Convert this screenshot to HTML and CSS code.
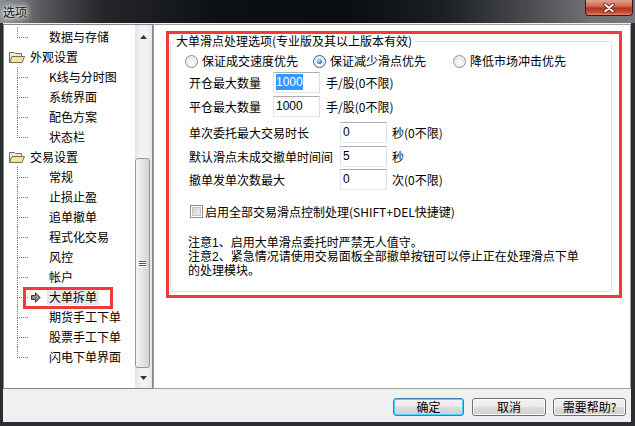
FILE: index.html
```html
<!DOCTYPE html>
<html lang="zh-CN">
<head>
    <meta charset="UTF-8">
    <meta name="viewport" content="width=device-width, initial-scale=1.0">
    <title>选项</title>
    <link rel="stylesheet" href="styles.css">
</head>
<body>

    <div class="window">
        <div class="titlebar">
            <span class="title">选项</span>
            <div class="close-btn">
                <svg width="12" height="10" viewBox="0 0 12 10">
                    <path d="M2 1.5 L10 8.5 M10 1.5 L2 8.5" stroke="#4a2018" stroke-width="3.4" stroke-linecap="round"/>
                    <path d="M2 1.5 L10 8.5 M10 1.5 L2 8.5" stroke="#fff" stroke-width="1.8" stroke-linecap="round"/>
                </svg>
            </div>
        </div>

        <div class="frame">
            <div class="main">
                <!-- 左侧树 -->
                <div class="tree">
                    <div class="tree-list">
                        <div class="node child last">
                            <span class="branch"><i class="branch-top"></i><i class="branch-bot"></i></span>
                            <span class="node-icon"></span>
                            <span class="node-text">数据与存储</span>
                        </div>
                        <div class="node group">
                            <svg class="folder" width="16" height="12" viewBox="0 0 16 12">
                                <path d="M0.5 11.5 V1.5 H5.5 L6.5 2.5 H12.5 V5" fill="#ecebdc" stroke="#6f6f60"/>
                                <path d="M0.5 11.5 L3 5.5 H15.5 L13 11.5 Z" fill="#f7e68a" stroke="#6f6f60"/>
                            </svg>
                            <span class="node-text">外观设置</span>
                        </div>
                        <div class="node child">
                            <span class="branch"><i class="branch-top"></i><i class="branch-bot"></i></span>
                            <span class="node-icon"></span>
                            <span class="node-text">K线与分时图</span>
                        </div>
                        <div class="node child">
                            <span class="branch"><i class="branch-top"></i><i class="branch-bot"></i></span>
                            <span class="node-icon"></span>
                            <span class="node-text">系统界面</span>
                        </div>
                        <div class="node child">
                            <span class="branch"><i class="branch-top"></i><i class="branch-bot"></i></span>
                            <span class="node-icon"></span>
                            <span class="node-text">配色方案</span>
                        </div>
                        <div class="node child last">
                            <span class="branch"><i class="branch-top"></i><i class="branch-bot"></i></span>
                            <span class="node-icon"></span>
                            <span class="node-text">状态栏</span>
                        </div>
                        <div class="node group">
                            <svg class="folder" width="16" height="12" viewBox="0 0 16 12">
                                <path d="M0.5 11.5 V1.5 H5.5 L6.5 2.5 H12.5 V5" fill="#ecebdc" stroke="#6f6f60"/>
                                <path d="M0.5 11.5 L3 5.5 H15.5 L13 11.5 Z" fill="#f7e68a" stroke="#6f6f60"/>
                            </svg>
                            <span class="node-text">交易设置</span>
                        </div>
                        <div class="node child">
                            <span class="branch"><i class="branch-top"></i><i class="branch-bot"></i></span>
                            <span class="node-icon"></span>
                            <span class="node-text">常规</span>
                        </div>
                        <div class="node child">
                            <span class="branch"><i class="branch-top"></i><i class="branch-bot"></i></span>
                            <span class="node-icon"></span>
                            <span class="node-text">止损止盈</span>
                        </div>
                        <div class="node child">
                            <span class="branch"><i class="branch-top"></i><i class="branch-bot"></i></span>
                            <span class="node-icon"></span>
                            <span class="node-text">追单撤单</span>
                        </div>
                        <div class="node child">
                            <span class="branch"><i class="branch-top"></i><i class="branch-bot"></i></span>
                            <span class="node-icon"></span>
                            <span class="node-text">程式化交易</span>
                        </div>
                        <div class="node child">
                            <span class="branch"><i class="branch-top"></i><i class="branch-bot"></i></span>
                            <span class="node-icon"></span>
                            <span class="node-text">风控</span>
                        </div>
                        <div class="node child">
                            <span class="branch"><i class="branch-top"></i><i class="branch-bot"></i></span>
                            <span class="node-icon"></span>
                            <span class="node-text">帐户</span>
                        </div>
                        <div class="node child selected">
                            <span class="branch"><i class="branch-top"></i><i class="branch-bot"></i></span>
                            <span class="node-icon">
                                <svg width="10" height="11" viewBox="0 0 10 11">
                                    <path d="M0.5 3.5 H4.5 V0.8 L9.3 5.5 L4.5 10.2 V7.5 H0.5 Z" fill="#8a8a8a" stroke="#3a3a3a"/>
                                </svg>
                            </span>
                            <span class="node-text">大单拆单</span>
                            <span class="mark"></span>
                        </div>
                        <div class="node child">
                            <span class="branch"><i class="branch-top"></i><i class="branch-bot"></i></span>
                            <span class="node-icon"></span>
                            <span class="node-text">期货手工下单</span>
                        </div>
                        <div class="node child">
                            <span class="branch"><i class="branch-top"></i><i class="branch-bot"></i></span>
                            <span class="node-icon"></span>
                            <span class="node-text">股票手工下单</span>
                        </div>
                        <div class="node child last">
                            <span class="branch"><i class="branch-top"></i><i class="branch-bot"></i></span>
                            <span class="node-icon"></span>
                            <span class="node-text">闪电下单界面</span>
                        </div>
                    </div>

                    <div class="scrollbar">
                        <div class="scroll-btn up">
                            <svg width="7" height="4" viewBox="0 0 7 4"><path d="M0 4 L3.5 0 L7 4 Z" fill="#333"/></svg>
                        </div>
                        <div class="thumb">
                            <i></i><i></i><i></i>
                        </div>
                        <div class="scroll-btn down">
                            <svg width="7" height="4" viewBox="0 0 7 4"><path d="M0 0 L3.5 4 L7 0 Z" fill="#333"/></svg>
                        </div>
                    </div>
                </div>

                <!-- 右侧设置 -->
                <div class="panel">
                    <div class="redbox">
                        <fieldset class="groupbox">
                            <legend>大单滑点处理选项(专业版及其以上版本有效)</legend>
                            <div class="group-body">
                                <div class="radio-row">
                                    <label class="opt"><span class="radio"></span>保证成交速度优先</label>
                                    <label class="opt"><span class="radio on"></span>保证减少滑点优先</label>
                                    <label class="opt"><span class="radio"></span>降低市场冲击优先</label>
                                </div>

                                <div class="field-row">
                                    <span class="field-label">开仓最大数量</span>
                                    <div class="edit"><span class="sel">1000</span></div>
                                    <span class="unit">手/股(0不限)</span>
                                </div>
                                <div class="field-row">
                                    <span class="field-label">平仓最大数量</span>
                                    <div class="edit">1000</div>
                                    <span class="unit">手/股(0不限)</span>
                                </div>

                                <div class="field-row wide first-wide">
                                    <span class="field-label">单次委托最大交易时长</span>
                                    <div class="edit">0</div>
                                    <span class="unit">秒(0不限)</span>
                                </div>
                                <div class="field-row wide">
                                    <span class="field-label">默认滑点未成交撤单时间间</span>
                                    <div class="edit">5</div>
                                    <span class="unit">秒</span>
                                </div>
                                <div class="field-row wide tight">
                                    <span class="field-label">撤单发单次数最大</span>
                                    <div class="edit">0</div>
                                    <span class="unit">次(0不限)</span>
                                </div>

                                <label class="check-row"><span class="checkbox"></span>启用全部交易滑点控制处理(SHIFT+DEL快捷键)</label>

                                <div class="notes">
                                    <p class="note-one">注意1、启用大单滑点委托时严禁无人值守。</p>
                                    <p class="note-two">注意2、紧急情况请使用交易面板全部撤单按钮可以停止正在处理滑点下单<br>的处理模块。</p>
                                </div>
                            </div>
                        </fieldset>
                    </div>
                </div>
            </div>

            <div class="footer">
                <button class="btn default ok">确定</button>
                <button class="btn cancel">取消</button>
                <button class="btn help">需要帮助?</button>
            </div>
        </div>
    </div>

</body>
</html>
```

FILE: styles.css
```css
/* Reset */
* {
    margin: 0;
    padding: 0;
    box-sizing: border-box;
}

body {
    width: 635px;
    height: 426px;
    overflow: hidden;
    font-family: "Noto Sans CJK SC", "Noto Sans", sans-serif;
    font-size: 12px;
    color: #000;
    background-color: #2b2d31;
}

.window {
    width: 635px;
    height: 426px;
    display: flex;
    flex-direction: column;
    background-color: #2b2d31;
}

/* 标题栏 */
.titlebar {
    height: 23px;
    display: flex;
    justify-content: space-between;
    align-items: flex-start;
    background: linear-gradient(90deg, #8c8e92 0%, #55575b 7%, #24262a 16%, #0c0f14 35%, #0a0d12 55%, #1c1f24 70%, #4c4e52 84%, #6f7175 93%, #75777b 100%);
}

.title {
    margin: 5px 0 0 3px;
    line-height: 13px;
    color: #111;
    text-shadow: 0 0 3px #fff, 0 0 6px #fff, 0 0 8px #fff;
}

.close-btn {
    width: 48px;
    height: 16px;
    margin-right: 2px;
    border: 1px solid #3a1a14;
    border-top: none;
    border-radius: 0 0 4px 4px;
    background: linear-gradient(#e3a08f, #d46a52 40%, #b8321c 55%, #c9503a 85%, #e08a6f);
    display: flex;
    align-items: center;
    justify-content: center;
}

/* 窗口主体 */
.frame {
    flex: 1;
    margin: 0 4px 4px 3px;
    padding-top: 1px;
    background-color: #f0f0f0;
    display: flex;
    flex-direction: column;
}

.main {
    height: 365px;
    display: flex;
}

/* 树 */
.tree {
    width: 150px;
    border: 1px solid #828790;
    background-color: #fff;
    display: flex;
}

.tree-list {
    width: 131px;
    padding-top: 2px;
}

.node {
    height: 20px;
    display: flex;
    align-items: center;
    white-space: nowrap;
}

.node-text {
    line-height: 16px;
}

.group .folder {
    margin-left: 5px;
}

.group .node-text {
    margin-left: 5px;
}

.branch {
    width: 11px;
    height: 20px;
    margin-left: 13px;
    display: flex;
    flex-direction: column;
}

.branch-top {
    height: 11px;
    border-left: 1px dotted #7a7a7a;
    border-bottom: 1px dotted #7a7a7a;
}

.branch-bot {
    height: 9px;
    border-left: 1px dotted #7a7a7a;
}

.last .branch-bot {
    border-left-color: transparent;
}

.node-icon {
    width: 21px;
    height: 20px;
    padding-left: 3px;
    display: flex;
    align-items: center;
}

.selected {
    position: relative;
}

.selected .node-text {
    margin-left: -2px;
    padding: 0 2px;
    background-color: #e8e8e8;
}

.mark {
    position: absolute;
    left: 19px;
    top: 0;
    width: 90px;
    height: 22px;
    border: 3px solid #f33a3a;
}

/* 滚动条 */
.scrollbar {
    width: 17px;
    display: flex;
    flex-direction: column;
    background: linear-gradient(90deg, #e3e3e3, #f2f2f2 30%, #f2f2f2 70%, #e6e6e6);
}

.scroll-btn {
    display: flex;
    justify-content: center;
    align-items: center;
}

.scroll-btn.up {
    height: 24px;
}

.scroll-btn.down {
    height: 20px;
}

.thumb {
    height: 210px;
    margin: 109px 2px 0 0;
    border: 1px solid #979797;
    border-radius: 3px;
    background: linear-gradient(90deg, #f4f4f4, #e6e6e6 45%, #d3d3d3 100%);
    display: flex;
    flex-direction: column;
    justify-content: center;
    align-items: center;
    gap: 1px;
}

.thumb i {
    width: 7px;
    height: 1px;
    background-color: #555;
    box-shadow: 0 1px 0 #fafafa;
}

/* 右侧面板 */
.panel {
    width: 478px;
    border: 1px solid #a0a0a0;
    background-color: #fff;
    padding: 6px 0 0 12px;
}

.redbox {
    width: 456px;
    height: 267px;
    border: 3px solid #f33a3a;
    padding-left: 1px;
}

.groupbox {
    width: 442px;
    height: 258px;
    border: 1px solid #d5dfe5;
    border-radius: 3px;
    padding: 0;
}

.groupbox legend {
    margin-left: 3px;
    padding: 0 2px;
    line-height: 14px;
}

.group-body {
    padding-left: 14px;
}

.radio-row {
    height: 16px;
    margin-top: 5px;
    display: flex;
    align-items: center;
}

.opt {
    display: flex;
    align-items: center;
    gap: 4px;
    line-height: 16px;
}

.opt:nth-child(1) {
    width: 128px;
}

.opt:nth-child(2) {
    width: 140px;
}

.radio {
    width: 13px;
    height: 13px;
    border-radius: 50%;
    border: 1px solid #8e8f8f;
    background: radial-gradient(circle at 50% 60%, #fbfbfb 20%, #e6e6e6 55%, #cfcfcf 100%);
    box-shadow: inset 0 0 0 1px #f4f4f4;
    display: flex;
    align-items: center;
    justify-content: center;
}

.radio.on {
    border-color: #2c628b;
}

.radio.on::after {
    content: "";
    width: 5px;
    height: 5px;
    border-radius: 50%;
    background: radial-gradient(circle at 40% 35%, #bfe4ff 10%, #3d8fd6 50%, #1b4a78 100%);
}

.field-row {
    height: 21px;
    margin-top: 3px;
    padding-left: 4px;
    display: flex;
    align-items: center;
}

.field-label {
    width: 84px;
    line-height: 16px;
    white-space: nowrap;
}

.wide .field-label {
    width: 151px;
}

.first-wide {
    margin-top: 5px;
}

.tight {
    margin-top: 2px;
}

.edit {
    width: 47px;
    height: 21px;
    border: 1px solid;
    border-color: #abadb3 #dbdfe6 #e3e9ef #e2e3ea;
    padding: 1px 0 0 2px;
    font-family: "Liberation Sans", Arial, sans-serif;
    font-size: 12px;
    line-height: 16px;
    background-color: #fff;
}

.sel {
    background-color: #3399ff;
    color: #fff;
    padding: 1px 0;
}

.unit {
    margin-left: 6px;
    line-height: 16px;
    white-space: nowrap;
}

.wide .unit {
    margin-left: 5px;
}

.check-row {
    height: 14px;
    margin-top: 14px;
    padding-left: 5px;
    display: flex;
    align-items: center;
    gap: 2px;
    white-space: nowrap;
}

.checkbox {
    width: 13px;
    height: 13px;
    border: 1px solid #8f8f8f;
    background: linear-gradient(135deg, #cfcfcf, #f2f2f2);
    box-shadow: inset 0 0 0 1px #fff, inset 0 0 0 2px #c4c4c4;
}

/* 注意事项: 行距很紧 */
.notes {
    margin-top: 18px;
    padding-left: 3px;
    white-space: nowrap;
    font-family: "Liberation Sans", "Noto Sans CJK SC", sans-serif;
    line-height: 14px;
}

.note-two {
    margin-top: 0;
}

/* 底部按钮 */
.footer {
    height: 33px;
    padding: 9px 5px 0 0;
    display: flex;
    justify-content: flex-end;
    align-items: flex-start;
}

.btn {
    height: 18px;
    border: 1px solid #707070;
    border-radius: 3px;
    background: linear-gradient(#f2f2f2, #ebebeb 48%, #dddddd 52%, #cfcfcf);
    box-shadow: inset 0 0 0 1px #fcfcfc;
    font-family: "Noto Sans CJK SC", "Noto Sans", sans-serif;
    font-size: 12px;
    line-height: 14px;
    color: #000;
}

.btn.default {
    border-color: #3c7fb1;
    box-shadow: inset 0 0 0 1px #48d4ff;
}

.ok {
    width: 71px;
}

.cancel {
    width: 74px;
    margin-left: 8px;
}

.help {
    width: 73px;
    margin-left: 7px;
}
```
